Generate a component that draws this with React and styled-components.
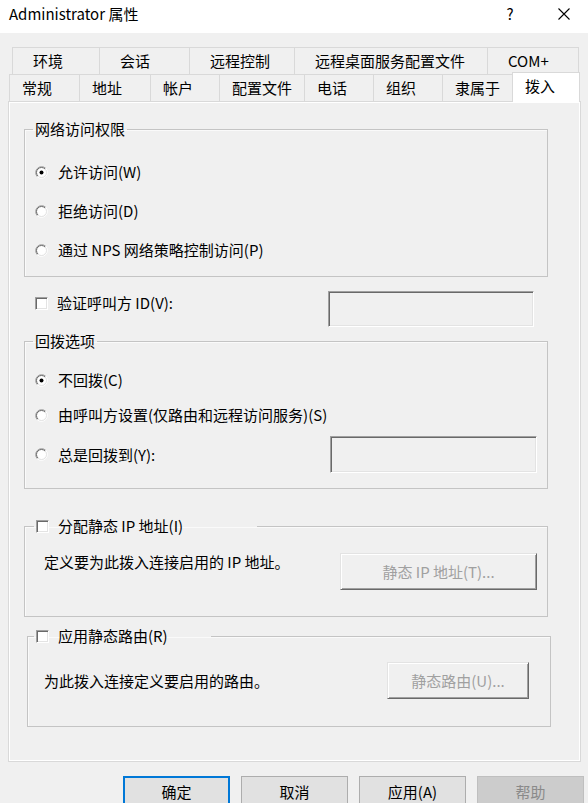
import React from 'react';
import styled, { createGlobalStyle, css } from 'styled-components';

const GlobalStyle = createGlobalStyle`
  html, body {
    margin: 0;
    padding: 0;
    background: #f0f0f0;
  }

  body {
    font-family: "Noto Sans CJK SC", "Noto Sans", sans-serif;
    font-size: 15px;
    color: #000;
  }
`;

const Window = styled.div`
  width: 588px;
  height: 803px;
  overflow: hidden;
  background: #f0f0f0;
  display: flex;
  flex-direction: column;
`;

const TitleBar = styled.div`
  height: 33px;
  flex: none;
  box-sizing: border-box;
  padding: 0 1px 5px 9px;
  display: flex;
  align-items: center;
  background: #fff;
  line-height: 18px;
`;

const TitleText = styled.span`
  flex: 1;
`;

const TitleControls = styled.div`
  display: flex;
  gap: 8px;
`;

const TitleButton = styled.span`
  width: 46px;
  height: 22px;
  display: flex;
  align-items: center;
  justify-content: center;
`;

const Content = styled.div`
  padding: 14px 0 0 8px;
`;

const TabRow = styled.div`
  display: flex;
  align-items: flex-end;
  padding-left: ${({ $offset }) => $offset}px;
`;

const Tab = styled.div`
  box-sizing: border-box;
  width: ${({ $width }) => $width}px;
  height: 27px;
  margin-right: -1px;
  padding-left: ${({ $pad }) => $pad}px;
  display: flex;
  align-items: center;
  line-height: 18px;
  white-space: nowrap;
  background: #f0f0f0;
  border: 1px solid #d9d9d9;
  border-bottom: none;

  ${({ $active }) =>
    $active &&
    css`
      position: relative;
      z-index: 1;
      height: 30px;
      margin-top: -2px;
      margin-bottom: -1px;
      padding-bottom: 3px;
      background: #fff;
    `}
`;

const Panel = styled.div`
  box-sizing: border-box;
  width: 573px;
  padding: 18px 32px 34px 15px;
  border: 1px solid #d9d9d9;
  box-shadow: inset 1px 1px 0 #fff, inset -1px -1px 0 #fff;
  background: #f0f0f0;
`;

const Group = styled.fieldset`
  margin: ${({ $mt }) => $mt || 0}px ${({ $shift }) => -($shift || 0)}px 0 ${({ $shift }) => $shift || 0}px;
  padding: ${({ $pad }) => $pad};
  border: 1px solid #c4c4c4;
  box-shadow: inset 1px 1px 0 #fafafa;
  min-width: 0;
`;

const Legend = styled.legend`
  box-sizing: border-box;
  padding: 0 2px;
  margin-left: ${({ $ml }) => $ml}px;
  width: ${({ $width }) => ($width ? `${$width}px` : 'auto')};
  height: 18px;
  line-height: 18px;
  display: flex;
  align-items: center;
  white-space: nowrap;
`;

const Option = styled.div`
  height: 20px;
  margin-top: ${({ $mt }) => $mt || 0}px;
  display: flex;
  align-items: center;
  line-height: 20px;
  white-space: nowrap;
`;

const RadioIcon = styled.svg`
  flex: none;
  margin-right: 10px;
`;

const Check = styled.span`
  flex: none;
  box-sizing: border-box;
  width: 13px;
  height: 13px;
  margin-right: 9px;
  background: #fff;
  border-top: 1px solid #a0a0a0;
  border-left: 1px solid #a0a0a0;
  border-right: 1px solid #fff;
  border-bottom: 1px solid #fff;
  box-shadow: inset 1px 1px 0 #696969, inset -1px -1px 0 #e3e3e3;
`;

const FieldRow = styled.div`
  display: flex;
  align-items: ${({ $align }) => $align || 'flex-start'};
  margin-top: ${({ $mt }) => $mt || 0}px;
  padding: 0 ${({ $right }) => $right || 0}px 0 ${({ $left }) => $left || 0}px;
`;

const RowLabel = styled.div`
  display: flex;
  align-items: center;
  height: 20px;
  margin-top: ${({ $mt }) => $mt || 0}px;
  line-height: 20px;
  white-space: nowrap;
`;

const TextBox = styled.div`
  flex: none;
  box-sizing: border-box;
  width: ${({ $width }) => $width}px;
  height: ${({ $height }) => $height}px;
  margin-left: auto;
  background: #f0f0f0;
  border-top: 1px solid #a0a0a0;
  border-left: 1px solid #a0a0a0;
  border-right: 1px solid #fff;
  border-bottom: 1px solid #fff;
  box-shadow: inset 1px 1px 0 #696969, inset -1px -1px 0 #e3e3e3;
`;

const Note = styled.div`
  line-height: 18px;
  white-space: nowrap;
`;

const PushButton = styled.button`
  flex: none;
  box-sizing: border-box;
  width: ${({ $width }) => $width}px;
  height: 37px;
  margin-left: auto;
  padding: 0;
  font: inherit;
  line-height: 18px;
  color: #a0a0a0;
  background: #f0f0f0;
  border-top: 1px solid #e3e3e3;
  border-left: 1px solid #e3e3e3;
  border-right: 1px solid #696969;
  border-bottom: 1px solid #696969;
  box-shadow: inset 1px 1px 0 #fff, inset -1px -1px 0 #a0a0a0;
`;

const ButtonBar = styled.div`
  display: flex;
  justify-content: flex-end;
  gap: 11px;
  margin-top: 14px;
  padding-right: 4px;
`;

const DialogButton = styled.button`
  box-sizing: border-box;
  width: 107px;
  height: 32px;
  padding: 0;
  font: inherit;
  line-height: 18px;
  color: #000;
  background: #e1e1e1;
  border: 1px solid #adadad;

  ${({ $primary }) =>
    $primary &&
    css`
      border: 2px solid #0078d7;
    `}

  &:disabled {
    color: #8a8a8a;
    background: #cccccc;
    border-color: #bfbfbf;
  }
`;

const Radio = ({ checked }) => (
  <RadioIcon width="13" height="13" viewBox="0 0 13 13">
    <circle cx="6.5" cy="6.5" r="5" fill="#fff" />
    <path d="M2.26 10.74A6 6 0 0 1 10.74 2.26" stroke="#a0a0a0" fill="none" />
    <path d="M10.74 2.26A6 6 0 0 1 2.26 10.74" stroke="#fff" fill="none" />
    <path d="M2.96 10.04A5 5 0 0 1 10.04 2.96" stroke="#696969" fill="none" />
    <path d="M10.04 2.96A5 5 0 0 1 2.96 10.04" stroke="#e3e3e3" fill="none" />
    {checked && <circle cx="6.5" cy="6.5" r="2" fill="#000" />}
  </RadioIcon>
);

const topTabs = [
  ['环境', 88],
  ['会话', 91],
  ['远程控制', 106],
  ['远程桌面服务配置文件', 194],
  ['COM+', 92],
];

const bottomTabs = [
  ['常规', 71],
  ['地址', 72],
  ['帐户', 70],
  ['配置文件', 86],
  ['电话', 70],
  ['组织', 70],
  ['隶属于', 71],
  ['拨入', 68],
];

const App = () => (
  <Window>
    <GlobalStyle />
    <TitleBar>
      <TitleText>Administrator 属性</TitleText>
      <TitleControls>
        <TitleButton>?</TitleButton>
        <TitleButton>
          <svg width="12" height="12" viewBox="0 0 12 12">
            <path d="M0.5 0.5L11.5 11.5M11.5 0.5L0.5 11.5" stroke="#000" strokeWidth="1.1" />
          </svg>
        </TitleButton>
      </TitleControls>
    </TitleBar>

    <Content>
      <TabRow $offset={4}>
        {topTabs.map(([label, width]) => (
          <Tab key={label} $width={width} $pad={20}>
            {label}
          </Tab>
        ))}
      </TabRow>
      <TabRow $offset={1}>
        {bottomTabs.map(([label, width]) => (
          <Tab key={label} $width={width} $pad={12} $active={label === '拨入'}>
            {label}
          </Tab>
        ))}
      </TabRow>

      <Panel>
        <Group $pad="24px 10px 16px 10px">
          <Legend $ml={-2}>网络访问权限</Legend>
          <Option>
            <Radio checked />
            允许访问(W)
          </Option>
          <Option $mt={19}>
            <Radio />
            拒绝访问(D)
          </Option>
          <Option $mt={19}>
            <Radio />
            通过 NPS 网络策略控制访问(P)
          </Option>
        </Group>

        <FieldRow $mt={14} $left={11} $right={14}>
          <RowLabel $mt={2}>
            <Check />
            验证呼叫方 ID(V):
          </RowLabel>
          <TextBox $width={206} $height={36} />
        </FieldRow>

        <Group $mt={5} $pad="20px 10px 15px 10px">
          <Legend $ml={-2}>回拨选项</Legend>
          <Option>
            <Radio checked />
            不回拨(C)
          </Option>
          <Option $mt={15}>
            <Radio />
            由呼叫方设置(仅路由和远程访问服务)(S)
          </Option>
          <FieldRow $mt={11} $align="center">
            <RowLabel>
              <Radio />
              总是回拨到(Y):
            </RowLabel>
            <TextBox $width={207} $height={37} />
          </FieldRow>
        </Group>

        <Group $mt={28} $pad="18px 10px 26px 19px">
          <Legend $ml={-10} $width={223}>
            <Check />
            分配静态 IP 地址(I)
          </Legend>
          <FieldRow>
            <Note>定义要为此拨入连接启用的 IP 地址。</Note>
            <PushButton $width={197} disabled>
              静态 IP 地址(T)...
            </PushButton>
          </FieldRow>
        </Group>

        <Group $mt={10} $shift={3} $pad="17px 21px 27px 16px">
          <Legend $ml={-10} $width={177}>
            <Check />
            应用静态路由(R)
          </Legend>
          <FieldRow $align="center">
            <Note>为此拨入连接定义要启用的路由。</Note>
            <PushButton $width={142} disabled>
              静态路由(U)...
            </PushButton>
          </FieldRow>
        </Group>
      </Panel>

      <ButtonBar>
        <DialogButton $primary>确定</DialogButton>
        <DialogButton>取消</DialogButton>
        <DialogButton>应用(A)</DialogButton>
        <DialogButton disabled>帮助</DialogButton>
      </ButtonBar>
    </Content>
  </Window>
);

export default App;
